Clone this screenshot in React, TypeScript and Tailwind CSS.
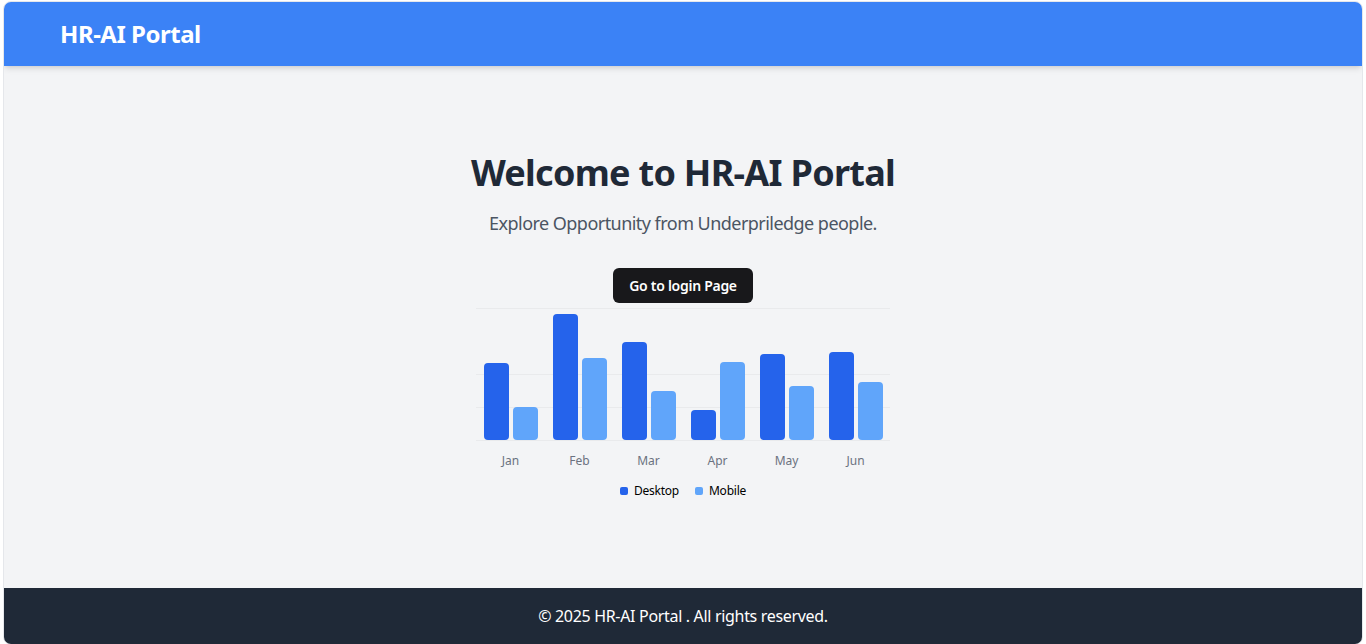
const months = [
  { m: "Jan", desktop: 186, mobile: 80 },
  { m: "Feb", desktop: 305, mobile: 200 },
  { m: "Mar", desktop: 237, mobile: 120 },
  { m: "Apr", desktop: 73, mobile: 190 },
  { m: "May", desktop: 209, mobile: 130 },
  { m: "Jun", desktop: 214, mobile: 140 },
];

const H = 132;
const MAX = 320;

function BarChart() {
  return (
    <div className="w-[414px] pt-[5px]">
      <div className="relative h-[132px]">
        {[0, 2, 3, 4].map((i) => (
          <div
            key={i}
            className="absolute left-0 right-0 h-px bg-[#e9eaec]"
            style={{ top: i * 33 }}
          />
        ))}
        <div className="relative grid grid-cols-6 h-full">
          {months.map((d) => (
            <div key={d.m} className="flex items-end justify-center gap-1">
              <div
                className="w-[25px] rounded bg-[#2563eb]"
                style={{ height: (d.desktop / MAX) * H }}
              />
              <div
                className="w-[25px] rounded bg-[#60a5fa]"
                style={{ height: (d.mobile / MAX) * H }}
              />
            </div>
          ))}
        </div>
      </div>
      <div className="grid grid-cols-6 mt-[13px]">
        {months.map((d) => (
          <div key={d.m} className="text-center text-xs text-[#6b7280]">
            {d.m}
          </div>
        ))}
      </div>
      <div className="flex justify-center items-center gap-4 mt-[14px] text-xs text-black tracking-[-0.02em]">
        <div className="flex items-center gap-1.5">
          <span className="w-2 h-2 rounded-[2px] bg-[#2563eb]" />
          Desktop
        </div>
        <div className="flex items-center gap-1.5">
          <span className="w-2 h-2 rounded-[2px] bg-[#60a5fa]" />
          Mobile
        </div>
      </div>
    </div>
  );
}

export default function App() {
  return (
    <div
      className="bg-white h-[644px] overflow-hidden px-[3px] pt-[1px]"
      style={{ fontFamily: '"Noto Sans", "Open Sans", sans-serif' }}
    >
      <div className="h-[644px] flex flex-col border border-gray-200 rounded-lg overflow-hidden">
        <header className="h-16 shrink-0 bg-[#3b82f6] shadow-md flex items-center pl-14 relative z-10">
          <h1 className="text-2xl font-bold text-white tracking-[-0.02em]">HR-AI Portal</h1>
        </header>
        <main className="flex-1 bg-[#f3f4f6] flex flex-col items-center pt-[87px]">
          <h2 className="text-4xl font-bold text-[#1f2937] tracking-[-0.02em]">
            Welcome to HR-AI Portal
          </h2>
          <p className="mt-4 text-lg text-[#4b5563] tracking-[-0.03em]">
            Explore Opportunity from Underpriledge people.
          </p>
          <button className="mt-[31px] h-[35px] px-4 rounded-md bg-[#18181b] text-white text-sm font-semibold tracking-[-0.02em]">
            Go to login Page
          </button>
          <BarChart />
        </main>
        <footer className="h-14 shrink-0 bg-[#1f2937] flex items-center justify-center text-white text-base tracking-[-0.02em]">
          © 2025 HR-AI Portal . All rights reserved.
        </footer>
      </div>
    </div>
  );
}
